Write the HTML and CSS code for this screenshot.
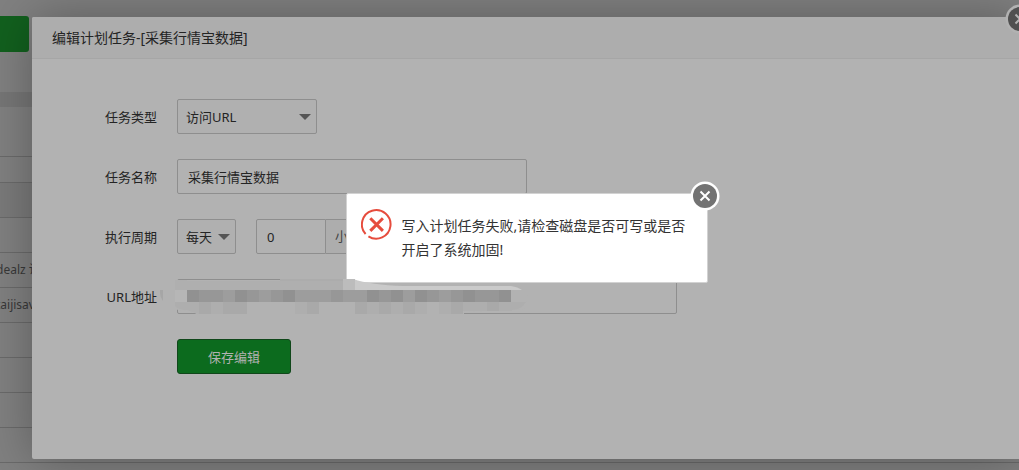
FILE: index.html
```html
<!DOCTYPE html>
<html lang="zh-CN">
<head>
<meta charset="utf-8">
<title>编辑计划任务</title>
<link rel="stylesheet" href="styles.css">
</head>
<body>
<main class="page">
  <div class="page-bar"><button class="page-action" type="button" aria-label="添加"></button></div>
  <div class="page-band"></div>
  <table class="task-table">
    <tbody>
      <tr class="head"><td></td></tr>
      <tr class="alt"><td></td></tr>
      <tr><td></td></tr>
      <tr><td>dealz 访问</td></tr>
      <tr><td>taijisave</td></tr>
      <tr><td></td></tr>
      <tr><td></td></tr>
      <tr><td></td></tr>
      <tr><td></td></tr>
    </tbody>
  </table>
</main>

<section class="modal" role="dialog" aria-labelledby="modal-title">
  <header class="modal-title" id="modal-title">编辑计划任务-[采集行情宝数据]</header>
  <button class="close close-dim" type="button" aria-label="关闭">
    <svg viewBox="0 0 30 30"><circle class="ring" cx="15" cy="15" r="14.5"/><circle class="disc" cx="15" cy="15" r="12"/><path d="M10.5 10.5l9 9M19.5 10.5l-9 9"/></svg>
  </button>
  <form class="form">
    <div class="row">
      <label class="label" for="type">任务类型</label>
      <span class="select select-wide"><select id="type"><option>访问URL</option></select></span>
    </div>
    <div class="row">
      <label class="label" for="name">任务名称</label>
      <input class="input input-name" id="name" type="text" value="采集行情宝数据">
    </div>
    <div class="row">
      <label class="label" for="cycle">执行周期</label>
      <span class="select select-small"><select id="cycle"><option>每天</option></select></span>
      <span class="group">
        <input class="input input-hour" id="hour" type="text" value="0">
        <label class="unit" for="hour">小时</label>
      </span>
    </div>
    <div class="row">
      <label class="label" for="url">URL地址</label>
      <span class="url-field">
        <input class="input input-url" id="url" type="text">
        <svg class="mosaic" viewBox="0 0 370 37" aria-hidden="true">
          <path fill="#b2b2b2" d="M14 3h168v2h180v8l6 4-4 14-60 3v3H38q-4-4-20-5l-4-2z"/>
          <path fill="#acacac" d="M120 1h63v2h-63z"/>
          <path fill="#cacaca" d="M183 1h10q18 6 50 7h108q7 1 11 4H183z"/>
          <path fill="#bcbcbc" d="M183 1h12v11h-12z"/>
          <path fill="#afafaf" d="M15 2h12v10H15zM27 3h156v9H27z"/>
          <path fill="#a6a6a6" d="M0 12h3v11q-3-4-3-8z"/>
          <path fill="#b6b6b6" d="M15 12h12v12H15z"/>
          <path fill="#979797" d="M27 12h324v12H27z"/>
          <path fill="#919191" d="M27 12h12v12H27zM75 12h12v12H75zM123 12h12v12h-12zM207 12h12v12h-12zM231 12h12v12h-12zM255 12h12v12h-12zM303 12h12v12h-12zM339 12h12v12h-12z"/>
          <path fill="#9d9d9d" d="M63 12h12v12H63zM99 12h12v12H99zM135 12h36v12h-36zM183 12h24v12h-24zM243 12h12v12h-12zM279 12h12v12h-12z"/>
          <path fill="#aeaeae" d="M15 24h12v8q-9 0-12-4zM27 24h325v9h-49v3H39L27 32z"/>
          <path fill="#a9a9a9" d="M39 24h12v12H39zM63 24h24v12H63zM147 24h12v12h-12zM195 24h12v12h-12zM219 24h12v12h-12zM243 24h12v12h-12zM291 24h12v12h-12zM327 24h12v9h-12z"/>
          <path fill="#b2b2b2" d="M87 24h48v12H87zM159 24h36v12h-36zM267 24h12v12h-12z"/>
          <path fill="#aeaeae" d="M352 24h14q-5 8-14 8z"/>
        </svg>
      </span>
    </div>
    <div class="row row-actions"><button class="save" type="button">保存编辑</button></div>
  </form>
</section>

<section class="alert" role="alertdialog" aria-label="提示">
  <svg class="alert-icon" viewBox="0 0 31 31" aria-hidden="true">
    <path class="arc" d="M4.6 25A14.3 14.3 0 1 1 7.4 27.4"/>
    <path class="cross" d="M9.3 9.3l12.6 12.6M21.9 9.3l-12.6 12.6"/>
  </svg>
  <p class="alert-text">写入计划任务失败,请检查磁盘是否可写或是否开启了系统加固!</p>
  <button class="close" type="button" aria-label="关闭">
    <svg viewBox="0 0 30 30"><circle class="ring" cx="15" cy="15" r="14.5"/><circle class="disc" cx="15" cy="15" r="12"/><path d="M10.5 10.5l9 9M19.5 10.5l-9 9"/></svg>
  </button>
</section>
</body>
</html>
```
FILE: styles.css
```css
* { box-sizing: border-box; }

body {
  margin: 0;
  min-height: 100vh;
  position: relative;
  overflow: hidden;
  background: #808080;
  color: #242424;
  font: 13px/20px "Noto Sans", "Noto Sans CJK SC", sans-serif;
}

button, input, select { font: inherit; color: inherit; margin: 0; }

.page { height: 100vh; overflow: hidden; }
.page-bar { height: 92px; padding-top: 16px; }
.page-action {
  display: block;
  width: 29px;
  height: 36px;
  border: 0;
  border-radius: 0 3px 3px 0;
  background: #12601e;
}
.page-band { height: 15px; background: #767676; }

.task-table {
  width: 100%;
  margin-top: 49px;
  border-collapse: collapse;
  border-top: 1px solid #6a6a6a;
  color: #383838;
  font-size: 12px;
  white-space: nowrap;
}
.task-table td {
  height: 35px;
  padding: 0;
  border-bottom: 1px solid #6a6a6a;
  text-indent: -4px;
}
.task-table .head td { height: 26px; }
.task-table .alt { background: #7a7a7a; }

.modal {
  position: absolute;
  top: 17px;
  right: -3px;
  left: 32px;
  min-height: 442px;
  border-radius: 2px;
  background: #b2b2b2;
  box-shadow: 1px 1px 50px rgba(0, 0, 0, .3);
}
.modal-title {
  height: 42px;
  padding: 0 20px;
  border-bottom: 1px solid #a6a6a6;
  border-radius: 2px 2px 0 0;
  background: #adadad;
  font-size: 14px;
  line-height: 42px;
}

.form {
  display: flex;
  flex-direction: column;
  gap: 25px;
  padding: 40px 20px;
}
.row { display: flex; align-items: center; height: 35px; }
.label { width: 105px; margin-right: 20px; text-align: right; }
.row-actions { padding-left: 125px; }

.select { position: relative; height: 35px; }
.select select {
  width: 100%;
  height: 100%;
  padding: 0 8px;
  border: 1px solid #8e8e8e;
  border-radius: 2px;
  background: #b0b0b0;
  appearance: none;
}
.select::after {
  content: "";
  position: absolute;
  top: 15px;
  right: 6px;
  border: 6px solid transparent;
  border-top-color: #555;
  border-bottom: 0;
  pointer-events: none;
}
.select-wide { width: 140px; }
.select-small { width: 59px; margin-right: 20px; }

.input {
  height: 35px;
  padding: 0 10px;
  border: 1px solid #8e8e8e;
  border-radius: 2px;
  background: #b2b2b2;
}
.input-name { width: 350px; }
.input-hour { width: 70px; border-radius: 2px 0 0 2px; }
.input-url { width: 500px; }

.group { display: flex; }
.unit {
  height: 35px;
  padding: 0 9px;
  border: 1px solid #8e8e8e;
  border-left: 0;
  background: #adadad;
  color: #444;
  line-height: 33px;
}

.url-field { display: flex; position: relative; }
.mosaic {
  position: absolute;
  z-index: 3;
  top: -1px;
  left: -17px;
  width: 370px;
  height: 37px;
}

.save {
  width: 114px;
  height: 35px;
  border: 1px solid #10471a;
  border-radius: 3px;
  background: #0c6b1e;
  color: #b2b2b2;
}

.alert {
  position: absolute;
  z-index: 2;
  top: 193px;
  left: calc(50% - 164px);
  display: flex;
  gap: 10px;
  width: 362px;
  min-height: 90px;
  padding: 17px 20px 20px 14px;
  border: 1px solid #d2d2d2;
  border-radius: 2px;
  background: #fff;
  color: #333;
}
.alert-icon { flex: none; width: 31px; height: 31px; margin-top: -2px; fill: none; stroke: #e64c3d; }
.arc { stroke-width: 2; }
.cross { stroke-width: 3; }
.alert-text { margin: 3px 0 0; font-size: 14px; line-height: 24px; }

.close {
  position: absolute;
  top: -13px;
  right: -13px;
  width: 30px;
  height: 30px;
  padding: 0;
  border: 0;
  background: none;
}
.close svg { display: block; width: 30px; height: 30px; fill: none; stroke: #fff; stroke-width: 2; }
.close .ring { fill: #fff; stroke: none; }
.close .disc { fill: #737373; stroke: none; }
.close-dim .ring { fill: #b2b2b2; }
.close-dim .disc { fill: #505050; }
.close-dim svg { stroke: #b2b2b2; }
```
